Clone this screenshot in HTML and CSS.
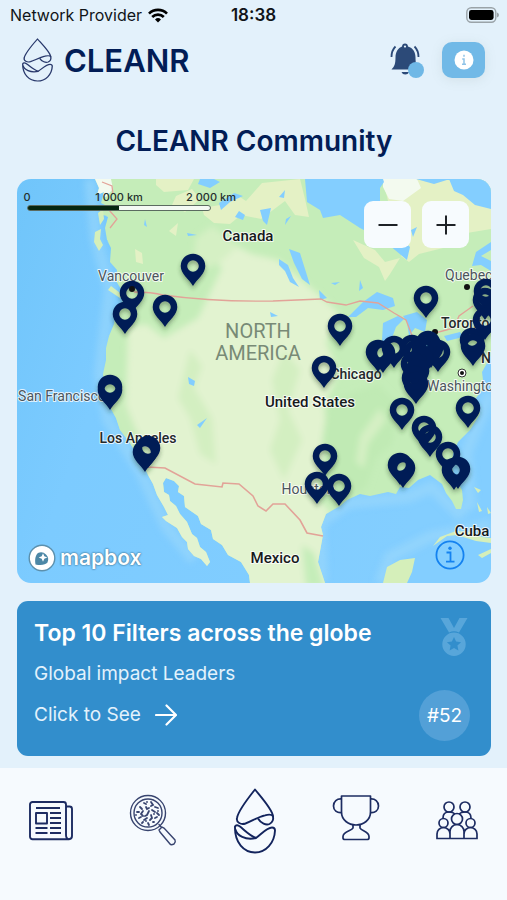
FILE: index.html
```html
<!DOCTYPE html>
<html lang="en">
<head>
    <meta charset="UTF-8">
    <meta name="viewport" content="width=device-width, initial-scale=1.0">
    <title>CLEANR Community</title>
    <link rel="stylesheet" href="styles.css">
</head>
<body>
    <div class="status-bar">
        <div class="carrier">
            <span>Network Provider</span>
            <svg width="20" height="15" viewBox="0 0 20 15" fill="none" stroke="#000" stroke-width="2.7">
                <path d="M1 5.6a12.8 12.8 0 0 1 18 0"/>
                <path d="M4.2 9a8.3 8.3 0 0 1 11.6 0"/>
                <path d="M10 14.6l-3-3.2a4.3 4.3 0 0 1 6 0z" fill="#000" stroke="none"/>
            </svg>
        </div>
        <span class="clock">18:38</span>
        <svg class="battery" width="33" height="16" viewBox="0 0 33 16">
            <rect x="0.8" y="0.8" width="29" height="14.4" rx="4.5" fill="none" stroke="#9aa3a8" stroke-width="1.4"/>
            <rect x="3" y="3" width="24.6" height="10" rx="2.4"/>
            <path d="M31 5.5q2 .6 2 2.5t-2 2.5z" fill="#9aa3a8"/>
        </svg>
    </div>

    <header class="header">
        <a class="brand" href="#">
            <svg width="31" height="44" viewBox="0 0 42 66" preserveAspectRatio="none" fill="none" stroke="#28386b" stroke-width="1.8" stroke-linejoin="round">
                <use href="#drop"/>
            </svg>
            <span>CLEANR</span>
        </a>
        <div class="actions">
            <button class="bell" aria-label="Notifications">
                <svg width="34" height="36" viewBox="0 0 34 36">
                    <path d="M15 1.5a3.2 3.2 0 0 1 3 3c5 1.5 7.500 5.500 7.500 11 0 6 1 9 4 12H1.500c3-3 4-6 4-12 0-5.500 2.500-9.500 6.500-11a3.200 3.200 0 0 1 3-3z" fill="#2c4a78"/>
                    <circle cx="15" cy="4.6" r="1.1" fill="#e3f1fb"/>
                    <path d="M11.5 30h7.500a4 4 0 0 1-7.500 0z" fill="#2c4a78"/>
                    <path d="M5.500 4.500Q1.500 8.500 1.500 15M24.500 4.500q4 4 4 10.500" fill="none" stroke="#2c4a78" stroke-width="1.8"/>
                    <circle cx="26" cy="28" r="8" fill="#6fb8e6"/>
                </svg>
            </button>
            <button class="info" aria-label="Information">
                <svg width="20" height="20" viewBox="0 0 20 20">
                    <circle cx="10" cy="10" r="9.5" fill="#fff"/>
                    <path d="M10 4.800v2M8.200 8.900H10v5.300M8 14.200h4" fill="none" stroke="#8fc3e8" stroke-width="1.5"/>
                </svg>
            </button>
        </div>
    </header>

    <main class="content">
        <h1>CLEANR Community</h1>

        <section class="map" aria-label="Community map">
            <svg class="map-canvas" viewBox="17 179 474 404">
                <defs>
                    <linearGradient id="sea" x1="0" x2="1" y1="0" y2="0.3">
                        <stop offset="0" stop-color="#70c5fa"/>
                        <stop offset="0.3" stop-color="#7ccbff"/>
                        <stop offset="1" stop-color="#83ceff"/>
                    </linearGradient>
                    <filter id="soft" x="-20%" y="-20%" width="140%" height="140%">
                        <feGaussianBlur stdDeviation="3"/>
                    </filter>
                    <filter id="shade" x="-30%" y="-20%" width="160%" height="150%">
                        <feDropShadow dx="0" dy="3" stdDeviation="2" flood-color="#24412c" flood-opacity="0.4"/>
                    </filter>
                    <clipPath id="land-clip">
                        <use href="#land"/>
                    </clipPath>
                    <path id="pin" fill-rule="evenodd" d="M0 20C-4 13-12.300 8-12.300 0a12.300 12.300 0 0 1 24.600 0C12.300 8 4 13 0 20zM0-5.800a5.800 5.800 0 1 0 0 11.600a5.800 5.800 0 1 0 0-11.600z"/>
                </defs>

                <rect x="17" y="179" width="474" height="404" fill="url(#sea)"/>

                <!-- shallow water -->
                <g fill="none" stroke="#a0dafb" stroke-width="12" opacity="0.5" filter="url(#soft)">
                    <path d="M90 179l6 60 14 50-10 85 8 46 32 50 26 56 28 34"/>
                    <path d="M322 583l-2-60 28-20 60-6 24-10 26 26 12-10-4-50 24-60"/>
                    <path d="M380 583l10-26 40-20 61-12"/>
                </g>

                <!-- mainland -->
                <path id="land" fill="#c5edb9" d="M95 179L99 188 97 195 104 192 101 203 107 206 101 214 108 217 105 228 107 240 111 248 110 262 117 270 116 281 121 289 126 297 121 304 116 312 114 324 109 336 106 348 106 360 103 374 104 385 108 400 111 409 116 418 120 430 130 443 136 453 144 466 148 475 153 484 157 495 164 507 168 515 162 517 166 521 177 528 182 537 187 542 188 549 194 556 201 559 207 566 210 562 206 552 200 547 197 538 192 534 187 522 180 514 176 506 170 501 169 495 164 492 163 483 166 478 174 481 179 486 178 492 184 496 185 507 198 516 201 524 211 530 213 539 222 545 228 555 241 562 249 575 250 583H325L318 562 323 535 321 527 326 514 340 506 347 500 360 494 370 496 379 494 388 492 396 494 400 487 409 488 418 480 430 475 442 484 446 493 452 501 456 509 461 509 463 500 462 490 456 480 452 468 453 454 458 442 470 430 480 414 476 398 484 388 482 372 491 356V179z"/>

                <g clip-path="url(#land-clip)">
                    <g filter="url(#soft)">
                        <!-- dry west and plains -->
                        <path fill="#e2f3d0" d="M128 328l18-4 18 14 34-20 24-50-18-20 20-8 28 14 26 6 40 34 22 20-14 28 12 30-14 34 4 32-10 44-4 42-8 18 28 8 16-18 8 12-14 18-8 22 8 60-90 30-80-50-24-110-28-52 4-60z"/>
                        <path fill="#e2f3d0" d="M150 430l100 20 80 60-10 90h-80l-60-60-50-70z"/>
                        <path fill="#d3efc1" d="M190 350l12 16-8 22 18 30 4 46-16-10-10-36-12-20zM284 350l16 20-12 40 14 30-18 40-14-30 10-30-8-40z"/>
                        <path fill="#c9edbb" d="M106 400l18 0 12 30 12 20 4 22-10-4-20-34z"/>
                        <path fill="#c0eab4" d="M328 402l50-18 20 20-6 40-16 14-10 30-26 10-12-26-6-30z"/>
                        <path fill="#d5f0c4" d="M360 436l20-28 6 12-18 24-4 24-8-6zM196 238l16-12 26 20-20 18-26 8z"/>
                        <path fill="#c5edb9" d="M302 545l12 8 10 34h-18z"/>
                    </g>
                    <!-- northern tundra -->
                    <path fill="#e4f1c5" d="M156 179h38l-6 11-24 2-8-7zM176 196l16-7 8 10-15 13-13-7zM202 208l18-3 14-12 12 8 16-18 38-4 5 20 4 18-14-2-10-14-24 18-20-4-11 9-16-1-10-8z"/>
                    <path fill="#e4f1c5" d="M383 179h67l24 18 17 12v20l-30 5-18 14-24 6-10 8-8-6 7-20-18-26zM353 240l22 10 10 12 15-4-10 16-5 7-6-14-15-9zM135 249l7 4 1 11-7-2zM178 223l-9 8 7 5z"/>
                    <path fill="#f3faef" d="M383 179h34l4 9-18 13-14-2-6-12zM94 179h17l2 10-7 8-9-4z"/>
                    <!-- bays and lakes -->
                    <g fill="#83ceff">
                        <path d="M305 179l2 23 13 8 3 8 17-3 20 13 23 12 24 20 3-13-10-10 0-24-20-10 0-15 4-6-1-3zM416 179l18 5 16-5zM449 179h42v30l-16-4-12-10-9-4zM472 266l4-14 15-10v8l-10 6 10 5v10l-10-6z"/>
                        <path d="M348 317l15-15 14-10 16 6 2 8-12 4-15-2-12 9zM382 340l1-17 15-7 6 3-8 8-6 16-6 2zM403 316l14-4 10 8-2 12-10-4-6 8-2-14zM444 336l16-4 3 5-16 4zM416 348l16-6 8-4-10 14-14 2z"/>
                        <path d="M200 179h14l6 3-10 6-12-4zM219 203l15-10 9 3-13 6-9 8zM239 211l6 4-2 5-8-3zM260 210l11-2-4 17-4-4zM285 190l-1 8-5-1zM286 219l5-3-6 9zM289 249l11 4 5 16 5 16-8-6-8-16zM279 259l9 6 5 13 6 9-9-5-5-11-6-6zM360 280l3 8-4 3zM331 283l9-1-5 3zM319 290l8 8-7 2zM145 219l2 8-3-2zM187 233l10 2-9 1zM411 230l6-3-4 10zM188 377l7 4-1 5-5-2zM197 425l10-7-7 10zM270 312l8 4-7 1z"/>
                        <path d="M98 208l5-2-4 8 8 2-4 12-7 0zM99 230l9 11 2 22-9-17-4-10z"/>
                    </g>
                </g>

                <!-- islands -->
                <g fill="#d5efba">
                    <path d="M95 232l6-3-1 10 3 6-4 6-5-9zM98 213l5-4 1 10-4 6zM111 286l13 10-4 2-12-8zM383 583l4-16 13-7 15-2-3 14-5 11zM433 546l7-9 16-6 16 1 10 5 9 1v5l-15-2-19-6-10 1zM478 555l13-6v4l-9 5zM474 487l7 3-3 3zM477 502l5 9-3 1zM487 507l4 6-3 1z"/>
                </g>

                <!-- borders -->
                <g fill="none" stroke="#e2a398" stroke-width="1.3">
                    <path d="M134 292q18 0 29 3 50 7 110 6l48-2 6 3 19 3 14-4 18 2 16 10 12 7 7 18M435 333l19-5 5-12 14-10M109 210l8 9-7 9M102 182l10 4 1 8"/>
                    <path stroke-width="1.6" d="M147 467L165 468 195 484 222 487 223 483 239 484 253 496 258 506 266 511 273 504 285 504 300 520 307 533 323 536"/>
                </g>

                <!-- place names -->
                <g class="places">
                    <circle cx="467" cy="287" r="3" fill="#111"/>
                    <circle cx="435" cy="332" r="3" fill="#111"/>
                    <circle cx="462" cy="373" r="4" fill="#fff" stroke="#333"/>
                    <circle cx="462" cy="373" r="2" fill="#111"/>
                    <text class="region" x="258" y="338">NORTH</text>
                    <text class="region" x="258" y="360">AMERICA</text>
                    <text class="country" x="248" y="241">Canada</text>
                    <text class="country" x="310" y="407">United States</text>
                    <text class="country" x="275" y="563">Mexico</text>
                    <text class="country" x="472" y="536">Cuba</text>
                    <text class="city" x="131" y="281">Vancouver</text>
                    <text class="city" x="62" y="401">San Francisco</text>
                    <text class="city" x="308" y="494">Houston</text>
                    <text class="city start" x="445" y="280">Quebec</text>
                    <text class="city start" x="427" y="391">Washington</text>
                    <text class="town" x="138" y="443">Los Angeles</text>
                    <text class="town" x="356" y="379">Chicago</text>
                    <text class="town start" x="441" y="328">Toronto</text>
                    <text class="town start" x="481" y="363">New York</text>
                </g>

                <g fill="#021d56" filter="url(#shade)">
                    <use href="#pin" x="193" y="266"/>
                    <use href="#pin" x="132" y="293"/>
                    <use href="#pin" x="125" y="314"/>
                    <use href="#pin" x="165" y="307"/>
                    <use href="#pin" x="110" y="387"/>
                    <use href="#pin" x="110" y="390"/>
                    <use href="#pin" x="148" y="448"/>
                    <use href="#pin" x="145" y="452"/>
                    <use href="#pin" x="340" y="326"/>
                    <use href="#pin" x="324" y="368"/>
                    <use href="#pin" x="426" y="298"/>
                    <use href="#pin" x="402" y="410"/>
                    <use href="#pin" x="468" y="408"/>
                    <use href="#pin" x="325" y="456"/>
                    <use href="#pin" x="317" y="484"/>
                    <use href="#pin" x="339" y="486"/>
                    <use href="#pin" x="400" y="465"/>
                    <use href="#pin" x="403" y="468"/>
                    <use href="#pin" x="424" y="428"/>
                    <use href="#pin" x="430" y="437"/>
                    <use href="#pin" x="448" y="454"/>
                    <use href="#pin" x="454" y="470"/>
                    <use href="#pin" x="458" y="469"/>
                    <use href="#pin" x="378" y="352"/>
                    <use href="#pin" x="383" y="353"/>
                    <use href="#pin" x="394" y="348"/>
                    <use href="#pin" x="412" y="347"/>
                    <use href="#pin" x="416" y="352"/>
                    <use href="#pin" x="424" y="350"/>
                    <use href="#pin" x="428" y="343"/>
                    <use href="#pin" x="431" y="348"/>
                    <use href="#pin" x="438" y="352"/>
                    <use href="#pin" x="421" y="359"/>
                    <use href="#pin" x="413" y="364"/>
                    <use href="#pin" x="417" y="371"/>
                    <use href="#pin" x="414" y="378"/>
                    <use href="#pin" x="416" y="384"/>
                    <use href="#pin" x="472" y="340"/>
                    <use href="#pin" x="473" y="346"/>
                    <use href="#pin" x="486" y="291"/>
                    <use href="#pin" x="485" y="300"/>
                    <use href="#pin" x="485" y="320"/>
                </g>
                <circle cx="132" cy="289" r="3" fill="#111"/>
            </svg>

            <div class="scale">
                <div class="scale-labels">
                    <span>0</span>
                    <span>1 000 km</span>
                    <span>2 000 km</span>
                </div>
                <div class="scale-line"></div>
            </div>

            <div class="zoom">
                <button aria-label="Zoom out">
                    <svg width="20" height="20" viewBox="0 0 20 20" stroke="#1e2227" stroke-width="2"><path d="M0.5 10h19"/></svg>
                </button>
                <button aria-label="Zoom in">
                    <svg width="20" height="20" viewBox="0 0 20 20" stroke="#1e2227" stroke-width="2"><path d="M0.5 10h19M10 0.5v19"/></svg>
                </button>
            </div>

            <a class="mapbox" href="#">
                <svg width="28" height="28" viewBox="0 0 28 28">
                    <circle cx="14" cy="14" r="12.8" fill="#fff" stroke="#5c90ad" stroke-width="1.4"/>
                    <path d="M7.500 20.500c-1-6 .3-9.500 2.500-11.500a7.200 7.200 0 0 1 9.500 9.500c-2 2.300-6 3.200-12 2z" fill="#4c87a6"/>
                    <path d="M15 9.300l1.300 3 3 1.200-3 1.300-1.300 3-1.300-3-3-1.300 3-1.200z" fill="#fff"/>
                </svg>
                <span>mapbox</span>
            </a>

            <button class="attribution" aria-label="Map attribution">
                <svg width="30" height="30" viewBox="0 0 30 30" fill="none" stroke="#1482f0" stroke-width="1.8">
                    <circle cx="15" cy="15" r="13.6"/>
                    <path d="M11.500 12.500h4v9M11 21.700h8.500"/>
                    <circle cx="15" cy="8.2" r="1.7" fill="#1482f0" stroke="none"/>
                </svg>
            </button>
        </section>

        <section class="card">
            <div class="card-text">
                <h2>Top 10 Filters across the globe</h2>
                <p>Global impact Leaders</p>
                <a class="see" href="#">
                    Click to See
                    <svg width="22" height="22" viewBox="0 0 22 22" fill="none" stroke="#fff" stroke-width="2.2" stroke-linecap="round" stroke-linejoin="round">
                        <path d="M1 11h20M11.500 1.500L21 11l-9.500 9.500"/>
                    </svg>
                </a>
            </div>
            <div class="card-side">
                <svg width="28" height="40" viewBox="0 0 28 40" fill="#58a6da">
                    <path d="M0.5 1h8l5.500 10 5.500-10h8l-8.500 14.500a12 12 0 0 0-10 0z"/>
                    <path fill-rule="evenodd" d="M14 15.500a11.700 11.700 0 1 0 0 23.400a11.700 11.700 0 1 0 0-23.400zM14 20l2.100 4.600 5 .6-3.700 3.400 1 5-4.400-2.500-4.400 2.500 1-5-3.700-3.400 5-.6z"/>
                </svg>
                <span class="rank">#52</span>
            </div>
        </section>
    </main>

    <nav class="tabs">
        <a href="#" aria-label="News">
            <svg width="46" height="66" viewBox="0 0 46 66" fill="none" stroke="#1d2c62" stroke-width="1.9" stroke-linejoin="round">
                <path d="M4.500 14h31a2.500 2.500 0 0 1 2.500 2.500V47q0 4 3 4.200H4.500A2.500 2.500 0 0 1 2 48.700V16.500A2.500 2.500 0 0 1 4.500 14zM38 18.500h3.500A2.500 2.500 0 0 1 44 21v27q0 3-3 3.200"/>
                <path d="M8 20h24M8 25h11v10.500H8zM22 25h11M22 30h11M22 35h11M7.500 40h12M22 40h11M7.500 45h12M22 45h11"/>
            </svg>
        </a>
        <a href="#" aria-label="Research">
            <svg width="48" height="66" viewBox="0 0 48 66" fill="none" stroke="#38446f" stroke-width="1.4" stroke-linecap="round">
                <circle cx="19" cy="25" r="17.5"/>
                <circle cx="19" cy="25" r="14"/>
                <path d="M30 42l3-3 2 1 11 12q1 2-1 4-3 1.500-4 0L31 44zM32.500 39.500l-2.500-3"/>
                <path stroke-width="1.8" d="M15 15l2 1M22 14l2 3-2 1M11 19l2 2M17 19l1 2 2-1M26 19l3 1M8 24l2 0M14 23l-2 3 2 2M20 23l-2 4-2 1M23 22l3 2M28 25l2 2M10 30l2-1M15 32l3-2M22 27l1 3-2 2M26 30l2-1M13 35l1-1M19 35l1 2M24 34l1 0M7 27h0M18 14h0M29 23h0M25 26h0M17 33h0"/>
            </svg>
        </a>
        <a href="#" aria-label="Home">
            <svg width="44" height="66" viewBox="0 0 42 66" fill="none" stroke="#13245d" stroke-width="1.9" stroke-linejoin="round">
                <g id="drop">
                    <path d="M21 1.500C15 9 4 24 3 30c-1 4.500 4 7 8.500 5.500C18 33 24 29 31 27.300c3-.8 6.500-1 8 .7C38 21 27 9 21 1.500z"/>
                    <path d="M24 30.500c3 5 8 7 11.500 5.500 3-1.500 4-5 3.500-8"/>
                    <path d="M1 38.500c1-2 3-1.500 5 0 5 4 9.500 9 16 11.500 6-4.500 11-10.500 16-10.500 2.500 0 3 1 3 3C40.500 55 32 64.500 21 64.500S.5 55 1 38.500z"/>
                    <path d="M1.500 41.500c1 6 10 11 20.500 8.500"/>
                </g>
            </svg>
        </a>
        <a href="#" aria-label="Trophies">
            <svg width="48" height="66" viewBox="0 0 48 66" fill="none" stroke="#1d2c62" stroke-width="1.7" stroke-linejoin="round">
                <path d="M9.500 8h29v16c0 8-7 13-14.500 13S9.500 32 9.500 24z"/>
                <path d="M9.500 11C5 10.500 1.500 13.500 1.500 18S5 25 9.500 24.500M38.500 11c4.500-.5 8 2.500 8 7s-3.500 7-8 6.500M21 37v3c-1 3-10 3-10 8.500V50q0 1.500 2 1.500h22q2 0 2-1.500v-1.500C37 43 29 43 28 40v-3"/>
            </svg>
        </a>
        <a href="#" aria-label="Community">
            <svg width="44" height="66" viewBox="0 0 44 66" fill="none" stroke="#1d2c62" stroke-width="1.7">
                <circle cx="14" cy="19" r="5"/>
                <circle cx="30" cy="19" r="5"/>
                <circle cx="22" cy="31" r="5.5"/>
                <circle cx="8.500" cy="35" r="4.5"/>
                <circle cx="35.500" cy="35" r="4.5"/>
                <path d="M8 30q0-6 6-6 4 0 6 2M36 30q0-6-6-6-4 0-6 2"/>
                <path d="M2 50.500v-4.500a6.500 6.500 0 0 1 13 0v4.500zM29 50.500v-4.500a6.500 6.500 0 0 1 13 0v4.500zM15 50.500v-7a7 7 0 0 1 14 0v7z"/>
            </svg>
        </a>
    </nav>
</body>
</html>
```

FILE: styles.css
```css
/* General */
* {
    box-sizing: border-box;
}

body {
    font-family: 'Inter', 'Liberation Sans', sans-serif;
    margin: 0;
    min-height: 100vh;
    background: #e3f1fb;
    color: #021d56;
    display: flex;
    flex-direction: column;
}

h1, h2, p {
    margin: 0;
}

a {
    color: inherit;
    text-decoration: none;
}

button {
    font: inherit;
    border: none;
    padding: 0;
    background: none;
    cursor: pointer;
    display: flex;
    align-items: center;
    justify-content: center;
}

svg {
    display: block;
    flex-shrink: 0;
}

/* Status bar */
.status-bar {
    display: grid;
    grid-template-columns: 1fr auto 1fr;
    align-items: center;
    height: 30px;
    padding: 0 8px;
    color: #101418;
    font-size: 16px;
}

.carrier {
    display: flex;
    align-items: center;
    gap: 6px;
    padding-left: 2px;
}

.clock {
    font-weight: 600;
    font-size: 17px;
}

.battery {
    justify-self: end;
}

/* Header */
.header {
    display: flex;
    justify-content: space-between;
    align-items: center;
    height: 60px;
    padding: 0 22px;
}

.brand {
    display: flex;
    align-items: center;
    gap: 11px;
    font-size: 31px;
    font-weight: 600;
}

.actions {
    display: flex;
    align-items: center;
    gap: 18px;
}

.info {
    width: 43px;
    height: 36px;
    border-radius: 10px;
    background: #71b9e7;
    box-shadow: 0 2px 12px rgba(120, 140, 130, 0.15);
}

/* Content */
.content {
    padding: 31px 16px 12px 17px;
}

h1 {
    font-size: 28px;
    line-height: 40px;
    font-weight: 600;
    text-align: center;
    margin-bottom: 18px;
}

/* Map */
.map {
    position: relative;
    border-radius: 14px;
    overflow: hidden;
    margin-bottom: 18px;
}

.map-canvas {
    width: 100%;
    height: auto;
}

.places text {
    font-family: 'Roboto', sans-serif;
    text-anchor: middle;
    paint-order: stroke;
    stroke: rgba(255, 255, 255, 0.8);
    stroke-width: 2px;
    stroke-linejoin: round;
}

.places .start {
    text-anchor: start;
}

.places .region {
    font-size: 20px;
    font-weight: 400;
    fill: #788a76;
    stroke: none;
}

.places .country {
    font-size: 15px;
    font-weight: 500;
    fill: #16191c;
}

.places .city {
    font-size: 14px;
    fill: #4c555c;
}

.places .town {
    font-size: 14px;
    font-weight: 500;
    fill: #24292c;
}

.scale {
    position: absolute;
    top: 12px;
    left: 10px;
    width: 184px;
}

.scale-labels {
    display: grid;
    grid-template-columns: 1fr 1fr 1fr;
    justify-items: center;
    width: 276px;
    margin-left: -46px;
    color: #26302e;
    font-size: 11px;
    line-height: 13px;
    font-weight: 500;
}

.scale-line {
    height: 6px;
    margin-top: 1px;
    border: 1px solid #5b6b60;
    border-radius: 3px;
    background: linear-gradient(90deg, #052611 50%, #f4faf4 50%);
}

.zoom {
    position: absolute;
    top: 22px;
    right: 22px;
    display: flex;
    gap: 11px;
}

.zoom button {
    width: 47px;
    height: 47px;
    border-radius: 9px;
    background: #f7fbfe;
}

.mapbox {
    position: absolute;
    left: 11px;
    bottom: 11px;
    display: flex;
    align-items: center;
    gap: 4px;
    color: #fff;
    font-size: 21px;
    line-height: 28px;
    font-weight: 600;
    text-shadow: 0 0 2px #3f7898, 0 0 2px #3f7898;
}

.attribution {
    position: absolute;
    right: 26px;
    bottom: 13px;
}

/* Leaderboard card */
.card {
    display: flex;
    justify-content: space-between;
    padding: 16px 21px 15px 17px;
    border-radius: 11px;
    background: #328ecc;
    color: #fff;
}

.card-text {
    display: flex;
    flex-direction: column;
    gap: 9px;
    padding-bottom: 10px;
    font-size: 19px;
    line-height: 32px;
    color: #e3f2fc;
}

h2 {
    font-size: 23px;
    line-height: 32px;
    font-weight: 600;
    color: #fff;
}

.see {
    display: flex;
    align-items: center;
    gap: 14px;
}

.card-side {
    display: flex;
    flex-direction: column;
    align-items: center;
    justify-content: space-between;
}

.card-side svg {
    align-self: flex-end;
    margin-right: 2px;
}

.rank {
    width: 51px;
    height: 51px;
    border-radius: 50%;
    background: #53a0d7;
    font-size: 19px;
    line-height: 51px;
    text-align: center;
}

/* Bottom tabs */
.tabs {
    flex: 1;
    display: flex;
    justify-content: space-between;
    align-items: flex-start;
    padding: 20px 28px;
    background: #f6fafe;
}
```
